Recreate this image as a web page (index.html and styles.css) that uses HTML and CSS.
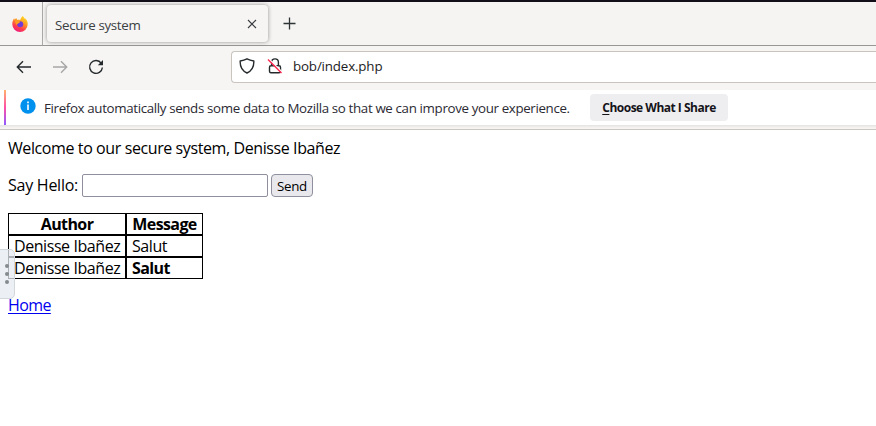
FILE: index.html
```html
<!DOCTYPE html>
<html lang="en">
<head>
<meta charset="utf-8">
<title>Secure system</title>
<link rel="stylesheet" href="styles.css">
</head>
<body>
<header class="tabs">
  <div class="pinned">
    <svg width="16" height="16" viewBox="0 0 16 16">
      <defs>
        <linearGradient id="fire" x1=".8" y1="0" x2=".3" y2="1"><stop offset="0" stop-color="#ffe226"/><stop offset=".4" stop-color="#ff9a22"/><stop offset=".72" stop-color="#ff3d4b"/><stop offset="1" stop-color="#ee1a82"/></linearGradient>
      </defs>
      <path fill="url(#fire)" d="M10.5 0c1.3.8 2 2 2.4 3l.5-.4c1.5 1.5 2.3 3.5 2.3 5.7A7.7 7.7 0 0 1 .3 8.300C.3 5.800 1 3.900 2.200 2.300l.4 1.500L4.200 2l.9 1.700c1 0 2-.2 3 .2C8.800 2.400 9.600 1.100 10.500 0z"/>
      <circle cx="8.200" cy="8.200" r="3" fill="#7139d7"/>
      <path fill="#ff9b20" d="M2.700 4.500c2-.8 3.600.2 5.500 1.300-.2 1.300-2 1.300-2.700 2.200l-1.300 1z"/>
    </svg>
  </div>
  <div class="tab"><span>Secure system</span>
    <svg class="close" width="10" height="10" viewBox="0 0 10 10"><path d="M1 1l8 8M9 1l-8 8" stroke="#3a3c3f" stroke-width="1.100"/></svg>
  </div>
  <svg class="plus" width="13" height="13" viewBox="0 0 13 13"><path d="M6.500 .5v12M.5 6.500h12" stroke="#2e3436" stroke-width="1.300"/></svg>
</header>
<nav class="toolbar">
  <svg class="icon" width="16" height="16" viewBox="0 0 16 16"><path d="M15 8H1.500M7 2.300L1.300 8 7 13.700"/></svg>
  <svg class="icon off" width="16" height="16" viewBox="0 0 16 16"><path d="M1 8h13.500M9 2.300L14.700 8 9 13.700"/></svg>
  <svg class="icon" width="16" height="16" viewBox="0 0 16 16"><path d="M13.300 4.300A6.400 6.400 0 1 0 14.400 8.500"/><path class="solid" d="M15 1v5.200H9.800z"/></svg>
  <div class="url">
    <svg class="icon" width="16" height="16" viewBox="0 0 16 16"><path d="M8 .9C6 2 3.500 2.700 1.200 3c-.3 5.500 1.500 9.700 6.800 12 5.300-2.300 7.100-6.500 6.800-12C12.500 2.700 10 2 8 .9z"/></svg>
    <svg class="icon lock" width="16" height="16" viewBox="0 0 16 16"><path d="M4.600 7.500V4.300a3.400 3.400 0 0 1 6.800 0v3.200M4 7.700h8q1.500 0 1.500 1.500v4q0 1.500-1.500 1.500H4q-1.500 0-1.500-1.500v-4q0-1.500 1.500-1.500z"/><path class="gap" d="M2 1l14 14"/><path class="slash" d="M1 1.500l13.500 13.500"/></svg>
    <span>bob/index.php</span>
  </div>
</nav>
<div class="notice">
  <svg width="16" height="16" viewBox="0 0 16 16"><circle cx="8" cy="8" r="7.700" fill="#0090ed"/><path d="M8 3.500v1.700M8 6.500v5.500" stroke="#fff" stroke-width="1.600"/></svg>
  <span class="info">Firefox automatically sends some data to Mozilla so that we can improve your experience.</span>
  <button class="choose"><u>C</u>hoose What I Share</button>
</div>
<main>
  <p class="welcome">Welcome to our secure system, Denisse Ibañez</p>
  <form class="hello"><label for="msg">Say Hello:</label><input id="msg" type="text"><button type="button">Send</button></form>
  <table>
    <tr><th>Author</th><th>Message</th></tr>
    <tr><td>Denisse Ibañez</td><td>Salut</td></tr>
    <tr><td>Denisse Ibañez</td><td><b>Salut</b></td></tr>
  </table>
  <a href="#">Home</a>
</main>
<div class="handle"><i></i><i></i><i></i></div>
</body>
</html>
```
FILE: styles.css
```css
* { box-sizing: border-box; }
body { margin: 0; height: 426px; overflow: hidden; background: #fff; font: 16px/22px "Open Sans", sans-serif; color: #000; }
svg { display: block; flex: none; fill: none; }
span, p, label, a { white-space: nowrap; }
.tabs { height: 46px; display: flex; align-items: center; background: #f5f4f2; border-top: 2px solid #120f18; border-bottom: 1px solid #999795; }
.pinned { width: 43px; height: 100%; padding: 14px 0 0 12px; border-right: 1px solid #aaa8a6; }
.tab { width: 221px; height: 37px; margin-left: 4px; padding: 0 11px 0 8px; display: flex; align-items: center; justify-content: space-between; border-radius: 4px; box-shadow: 0 0 4px rgba(0,0,0,.4); background: #f6f5f4; font-size: 13.330px; letter-spacing: -.33px; color: #3b4043; }
.tab span { padding-top: 2px; }
.plus { margin-left: 15px; }
.toolbar { height: 44px; padding: 0 0 2px 16px; display: flex; align-items: center; gap: 20px; background: #f6f5f4; }
.icon { stroke: #24292b; stroke-width: 1.400; }
.off { stroke: #a5a6a5; }
.solid { fill: #24292b; stroke: none; }
.url { flex: 1; height: 32px; margin: -1px 0 0 107px; padding: 0 0 2px 7px; display: flex; align-items: center; border: 1px solid #c9c4be; border-right: 0; border-radius: 4px 0 0 4px; background: #fff; font-size: 13.330px; letter-spacing: -.15px; color: #1c1b22; }
.lock { margin: 0 10px 0 12px; }
.gap { stroke: #fff; }
.slash { stroke: #ff2850; }
.notice { height: 40px; padding-left: 20px; display: flex; align-items: flex-start; position: relative; border-bottom: 1px solid #cdc7c2; background: linear-gradient(#fff 35px, #e4e3e2 35px, #f6f5f4 38px); }
.notice::before { content: ""; position: absolute; left: 4px; top: 0; width: 2px; height: 35px; background: linear-gradient(#ffb26b, #ff4fa5 50%, #9059ff); }
.notice svg { margin-top: 8px; }
.info { width: 546px; margin: 7px 0 0 8px; font-size: 13.330px; letter-spacing: -.355px; color: #2b2a33; }
.choose { width: 138px; height: 27px; margin-top: 4px; padding: 0; border: 0; border-radius: 4px; background: #eeeef0; font: bold 12px/22px "Open Sans", sans-serif; letter-spacing: -.5px; color: #15141a; white-space: nowrap; }
.choose u { text-underline-offset: 2px; }
main { padding: 7px 8px; }
p { margin: 0; }
.welcome { letter-spacing: -.4px; }
.hello { height: 23px; margin: 15px 0 16px; display: flex; align-items: center; }
.hello label { width: 74px; padding-bottom: 2px; letter-spacing: -.25px; }
.hello input { width: 186px; height: 23px; padding: 1px 2px; border: 1px solid #8f8f9d; border-radius: 2px; background: #fff; }
.hello button { width: 42px; height: 23px; margin-left: 3px; padding: 1px 0 0; border: 1px solid #8f8f9d; border-radius: 4px; background: #e9e9ed; font: 13.330px/20px "Open Sans", sans-serif; letter-spacing: -.3px; }
table { width: 195px; table-layout: fixed; border-spacing: 0; margin-bottom: 15px; white-space: nowrap; letter-spacing: -.43px; }
th, td { height: 22px; padding: 0 5px; border: 1px solid #000; line-height: 20px; }
th, b { letter-spacing: -.6px; }
th:first-child { width: 118px; }
a { color: #00e; letter-spacing: -.6px; text-underline-offset: 2px; }
.handle { position: absolute; left: -1px; top: 249px; width: 16px; height: 50px; padding: 0; display: flex; flex-direction: column; align-items: center; justify-content: center; gap: 4px; border: 1px solid #d2d7dc; border-radius: 0 5px 5px 0; background: rgba(229,235,240,.75); }
.handle i { width: 4px; height: 4px; border-radius: 50%; background: #858a8e; }
```
